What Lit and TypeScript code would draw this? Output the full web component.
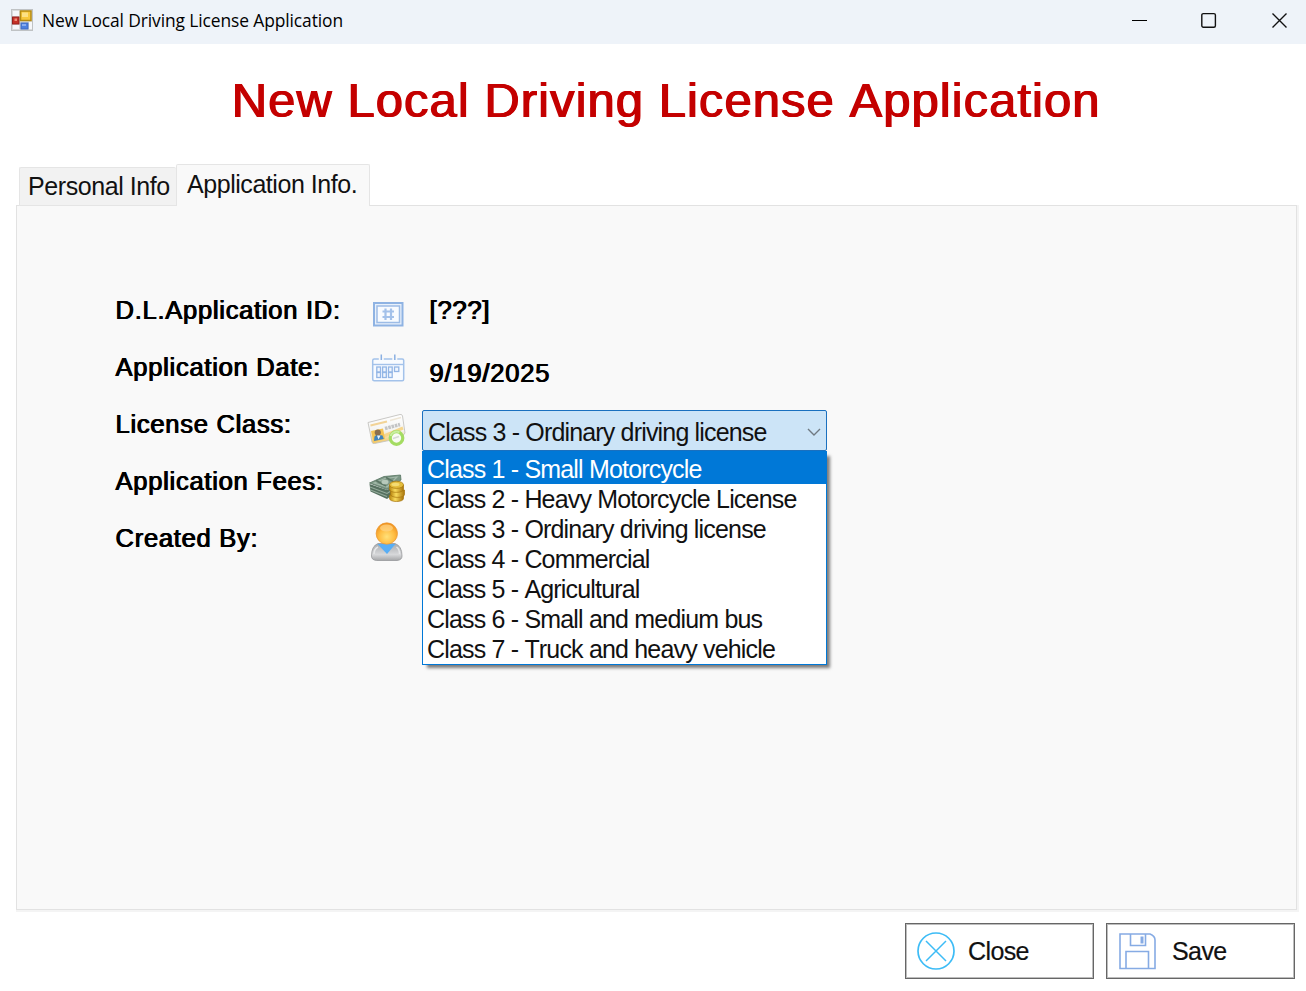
import { LitElement, html, css, svg } from "lit";
import { customElement, state } from "lit/decorators.js";

const idIcon = svg`
  <rect x="7" y="21" width="28.5" height="22.5" fill="#e9f1fb" stroke="#8fb3e3" stroke-width="2"/>
  <rect x="10" y="24" width="22.5" height="16.5" fill="#f8fbff" stroke="#9dbce6" stroke-width="1.5"/>
  <path d="M18.500 26.500v11.500M24 26.500v11.500M15.500 29.500h11.500M15.500 35h11.500" fill="none" stroke="#a3c1ea" stroke-width="2.200"/>`;

const calendarIcon = svg`
  <rect x="5.700" y="20" width="31" height="21.700" rx="1.500" fill="#f8fbff" stroke="#a3c2ea" stroke-width="1.500"/>
  <path d="M14.300 15.500v5.500M27.800 15.500v5.500" stroke="#f9f9f9" stroke-width="5"/>
  <path d="M14.300 15.500v5.500M27.800 15.500v5.500" stroke="#8ab0e2" stroke-width="1.500"/>
  <path d="M6 25.500h31" stroke="#a3c2ea" stroke-width="1.400"/>
  <g fill="#f1f6fd" stroke="#93b6e6" stroke-width="1.300">
    <rect x="9.800" y="28" width="3.700" height="5"/><rect x="15.600" y="28" width="3.700" height="5"/>
    <rect x="21.500" y="28" width="3.700" height="5"/><rect x="27.500" y="28" width="4.300" height="4.500"/>
    <rect x="9.800" y="33.500" width="3.700" height="5"/><rect x="15.600" y="33.500" width="3.700" height="5"/>
    <rect x="21.500" y="33.500" width="3.700" height="5"/>
  </g>`;

const cardIcon = svg`
  <defs>
    <linearGradient id="card" x1="0" y1="0" x2="0" y2="1">
      <stop offset="0" stop-color="#ffffff"/><stop offset=".55" stop-color="#f4f4f2"/><stop offset="1" stop-color="#f4c75c"/>
    </linearGradient>
  </defs>
  <path d="M1 26.500 33 18.500Q35 18 35.500 20L38 37 34 42 7.500 47.500Q5.500 48 5 46Z" fill="url(#card)" stroke="#c4c3c0" stroke-width=".9"/>
  <path d="M3.500 29.500 20 25.500" stroke="#f2d396" stroke-width="2.200"/>
  <path d="M23 24.500 34 21.500" stroke="#eee6d6" stroke-width="1.500"/>
  <path d="M18 32.500 33 28.500" stroke="#c3c4c5" stroke-width="3.500" stroke-dasharray="2.600 .8"/>
  <path d="M17 40 36 32" stroke="#f6d68d" stroke-width="3"/>
  <path d="M4 35 16 32.500 18 43 6.500 45.800Z" fill="#f4c251"/>
  <path d="M7 45 7.500 40.500 10 38.500 15.500 39.500 16.800 43Z" fill="#3f83bd"/>
  <circle cx="10.800" cy="36.500" r="3.100" fill="#8b6f4e"/>
  <path d="M10 39.500l1.500 4 2-4Z" fill="#ecf3f7"/>
  <circle cx="29.500" cy="42" r="6.300" fill="#f8fbf4" stroke="#a4dc62" stroke-width="3.200"/>
  <path d="M23.500 40a6.300 6.300 0 0 1 9-3.600" fill="none" stroke="#c9efa0" stroke-width="2"/>
  <path d="M26 42.500l6-2" stroke="#d6d9d6" stroke-width="1.500"/>`;

const feesIcon = svg`
  <defs>
    <linearGradient id="coin" x1="0" x2="1">
      <stop offset="0" stop-color="#b8860f"/><stop offset=".4" stop-color="#f9db5c"/><stop offset="1" stop-color="#a8740b"/>
    </linearGradient>
  </defs>
  <path d="M2.500 31 20 37 34 29V35L20 46 3.500 38.500Z" fill="#55705f"/>
  <path d="M3 34 20 40.500 32 33M3.500 37 20 43.500" fill="none" stroke="#94ab9b" stroke-width="1.100"/>
  <path d="M2.500 30 17 23.500 33.500 22 34 27 20 36.500Z" fill="#7c9685" stroke="#56735f" stroke-width=".8"/>
  <path d="M7 30 18 25.500 30 24 20 34Z" fill="none" stroke="#a3b9a9" stroke-width="1.200"/>
  <path d="M9 27.500 19 33M19 24.500 27 29" stroke="#5b7664" stroke-width="1.500"/>
  <ellipse cx="18" cy="29" rx="3.500" ry="2.300" fill="#b7c9bb"/>
  <g fill="url(#coin)" stroke="#a8760d" stroke-width=".7">
    <path d="M22.500 42v3.500c0 4 14 4 14 0v-3.500Z"/>
    <path d="M23.500 37v4.500c0 3.800 14 3.800 14 0V37Z"/>
    <path d="M22.500 32v4.500c0 3.800 14 3.800 14 0v-4.500Z"/>
    <ellipse cx="29.500" cy="31.800" rx="7" ry="3.600" fill="#e3bd3c"/>
  </g>
  <ellipse cx="28.500" cy="31.500" rx="4" ry="1.700" fill="#f4dc73"/>`;

const userIcon = svg`
  <defs>
    <radialGradient id="head" cx=".5" cy=".65" r=".65">
      <stop offset="0" stop-color="#ffe17a"/><stop offset=".55" stop-color="#ffbd42"/><stop offset="1" stop-color="#ee8d1c"/>
    </radialGradient>
    <linearGradient id="torso" x1="0" y1="0" x2="0" y2="1">
      <stop offset="0" stop-color="#a9abae"/><stop offset=".65" stop-color="#d7d8da"/><stop offset="1" stop-color="#a5a6a8"/>
    </linearGradient>
  </defs>
  <path d="M11 33.500H28Q35 36 35 46 35 50 30 50.500H9.500Q4.500 50 4.500 46 4.500 36 11 33.500Z" fill="url(#torso)" stroke="#97989b" stroke-width=".8"/>
  <path d="M7 44q0-5 4-7M32.500 44q0-5-3-7" fill="none" stroke="#e6e7e8" stroke-width="1.500"/>
  <path d="M10.500 34H28.500L20 44Z" fill="#58aef5"/>
  <circle cx="19.800" cy="23.500" r="10.700" fill="url(#head)" stroke="#e99a35" stroke-width=".7"/>
  <ellipse cx="19.500" cy="18" rx="6.500" ry="3.500" fill="#ffd487" opacity=".7"/>`;

@customElement("app-root")
export class AppRoot extends LitElement {
  @state() private highlighted = 0;

  private classes = [
    "Class 1 - Small Motorcycle",
    "Class 2 - Heavy Motorcycle License",
    "Class 3 - Ordinary driving license",
    "Class 4 - Commercial",
    "Class 5 - Agricultural",
    "Class 6 - Small and medium bus",
    "Class 7 - Truck and heavy vehicle",
  ];

  static styles = css`
    :host {
      display: flex;
      flex-direction: column;
      box-sizing: border-box;
      height: 991px;
      overflow: hidden;
      background: #fff;
      color: #111;
      font: 25px/30px "Liberation Sans", Arial, sans-serif;
      font-kerning: none;
    }
    * { box-sizing: border-box; }
    svg { display: block; flex: none; }
    .titlebar {
      display: flex;
      align-items: center;
      flex: none;
      height: 44px;
      padding: 0 18px 4px 11px;
      background: #eef3f9;
      color: #000;
    }
    .caption {
      flex: 1;
      margin-left: 9px;
      font: 17.4px/24px "Open Sans", "Noto Sans", sans-serif;
      letter-spacing: -0.1px;
      white-space: nowrap;
    }
    .controls { display: flex; gap: 53px; }
    h1 {
      flex: none;
      margin: 28px 0 0;
      padding-left: 231px;
      height: 92px;
      font-size: 49px;
      font-weight: 400;
      line-height: 56px;
      letter-spacing: 1.03px;
      color: #c40000;
      text-shadow: 0.8px 0 0 #c40000, 1.4px 0 0 #c40000;
      white-space: nowrap;
    }
    .tabs {
      display: flex;
      align-items: flex-end;
      flex: none;
      height: 42px;
      margin: 0 0 -1px 19px;
      position: relative;
    }
    .tab {
      height: 39px;
      width: 157px;
      padding: 3px 0 0 8px;
      background: #f2f2f2;
      border: 1.500px solid #e5e5e5;
      border-right: 0;
      border-radius: 2px 2px 0 0;
      letter-spacing: -0.42px;
      white-space: nowrap;
    }
    .tab.active {
      width: 194px;
      height: 42px;
      padding: 4px 0 0 10px;
      background: #f9f9f9;
      border-right: 1.500px solid #e5e5e5;
      border-bottom: 0;
      letter-spacing: -0.45px;
    }
    .panel {
      flex: none;
      height: 705px;
      width: 1281px;
      margin-left: 16px;
      padding: 76px 0 0 98px;
      background: #f9f9f9;
      border: 1px solid #e2e2e2;
      box-shadow: 1px 1px 0 1px #f4f4f4;
    }
    .row { display: grid; grid-template-columns: 252px 55px 405px; height: 57px; }
    .bold {
      color: #000;
      font-size: 25.5px;
      letter-spacing: 0.74px;
      text-shadow: 0.6px 0 0 #000, 1.1px 0 0 #000;
      white-space: nowrap;
    }
    .label { padding-top: 13px; }
    .value { padding: 13px 0 0 7px; letter-spacing: 0.8px; }
    .value.low { padding-top: 19px; }
    .picker { position: relative; padding-top: 14px; letter-spacing: -0.83px; }
    .combo {
      display: flex;
      align-items: center;
      justify-content: space-between;
      height: 41px;
      padding: 2px 5px 0 5px;
      background: #cce4f7;
      border: 1.500px solid #1a70bf;
      border-radius: 2px;
      white-space: nowrap;
    }
    .menu {
      position: absolute;
      z-index: 2;
      top: 55px;
      left: 0;
      width: 405px;
      height: 214px;
      margin: 0;
      padding: 2px 0 0;
      list-style: none;
      background: #fff;
      border: 1.500px solid #0078d7;
      box-shadow: 4px 4px 3px -1px rgba(0, 0, 0, 0.5);
      letter-spacing: -0.82px;
      white-space: nowrap;
    }
    .option { height: 30px; padding-left: 4px; line-height: 30px; }
    .option.selected {
      background: #0078d7;
      color: #fff;
      margin-top: -2px;
      height: 32px;
      line-height: 34px;
    }
    .actions {
      display: flex;
      justify-content: flex-end;
      gap: 12px;
      padding: 13px 11px 0 0;
    }
    .action {
      display: flex;
      align-items: center;
      width: 189px;
      height: 56px;
      padding: 0 0 0 11px;
      font: inherit;
      color: #111;
      background: #fff;
      border: 1px solid #666;
      box-shadow: inset 0 0 0 1px #bdbdbd;
      border-radius: 0;
      letter-spacing: -0.6px;
      -webkit-text-stroke: 0.2px #111;
    }
    .action span { margin: 0 0 1px 13px; }
    .action.save span { margin-left: 16px; }
  `;

  private field(label: string, icon: unknown, value: unknown) {
    return html`<div class="row">
      <div class="bold label">${label}</div>
      <svg width="40" height="57" viewBox="0 0 40 57">${icon}</svg>
      ${value}
    </div>`;
  }

  private picker() {
    return html`<div class="picker">
      <div class="combo">
        <span>${this.classes[2]}</span>
        <svg width="14" height="10" viewBox="0 0 14 10"><path d="M1 2l6 6 6-6" fill="none" stroke="#707a82" stroke-width="1.400"/></svg>
      </div>
      <ul class="menu">
        ${this.classes.map(
          (name, i) => html`<li
            class="option ${i === this.highlighted ? "selected" : ""}"
            @mouseenter=${() => (this.highlighted = i)}
          >${name}</li>`
        )}
      </ul>
    </div>`;
  }

  render() {
    return html`
      <div class="titlebar">
        <svg width="22" height="22" viewBox="0 0 22 22">
          <rect x=".5" y=".5" width="21" height="21" fill="#d9dbdc" stroke="#bfc2c4"/>
          <path d="M2 2h6v5H2zM2 16h6v4H2zM18 13h3v7h-3z" fill="#f5f7fa"/>
          <rect x="1.500" y="8" width="6.500" height="7" fill="#c53126" stroke="#96201d"/>
          <rect x="3.500" y="9.500" width="2.500" height="2.500" fill="#ef8b79"/>
          <rect x="9.500" y="2" width="10.500" height="9.500" fill="#f8c83c" stroke="#b58b12" stroke-width="1.500"/>
          <rect x="11" y="3.500" width="6" height="4.500" fill="#fde184"/>
          <rect x="10" y="14" width="7" height="6" fill="#4c80df" stroke="#3f6bc4"/>
          <rect x="11" y="15" width="4" height="2" fill="#88acf0"/>
        </svg>
        <div class="caption">New Local Driving License Application</div>
        <div class="controls">
          <svg width="16" height="16" viewBox="0 0 16 16"><path d="M0 8.500h15" stroke="#000"/></svg>
          <svg width="16" height="16" viewBox="0 0 16 16"><rect x=".8" y="1.600" width="13.600" height="13.600" rx="1.500" fill="none" stroke="#111" stroke-width="1.400"/></svg>
          <svg width="18" height="16" viewBox="0 0 18 16"><path d="M2.500 1.500l14 14M16.500 1.500l-14 14" stroke="#111" stroke-width="1.400"/></svg>
        </div>
      </div>
      <h1>New Local Driving License Application</h1>
      <div class="tabs">
        <div class="tab">Personal Info</div>
        <div class="tab active">Application Info.</div>
      </div>
      <div class="panel">
        ${this.field("D.L.Application ID:", idIcon, html`<div class="bold value">[???]</div>`)}
        ${this.field("Application Date:", calendarIcon, html`<div class="bold value low">9/19/2025</div>`)}
        ${this.field("License Class:", cardIcon, this.picker())}
        ${this.field("Application Fees:", feesIcon, "")}
        ${this.field("Created By:", userIcon, "")}
      </div>
      <div class="actions">
        <button class="action">
          <svg width="38" height="38" viewBox="0 0 38 38"><circle cx="19" cy="19" r="18" fill="none" stroke="#3dbcf6" stroke-width="1.700"/><path d="M9 9l20 20M29 9L9 29" stroke="#3dbcf6" stroke-width="1.500"/></svg>
          <span>Close</span>
        </button>
        <button class="action save">
          <svg width="38" height="38" viewBox="0 0 38 38" fill="none" stroke="#86abe4" stroke-width="1.600"><path d="M2 2h30Q37 4 37 8v28.500H2z"/><path d="M12.500 2v11.500h15V2"/><path d="M8 36.500V19.500h22.500v17"/><path d="M24 4.500v7" stroke-width="3"/></svg>
          <span>Save</span>
        </button>
      </div>
    `;
  }
}
